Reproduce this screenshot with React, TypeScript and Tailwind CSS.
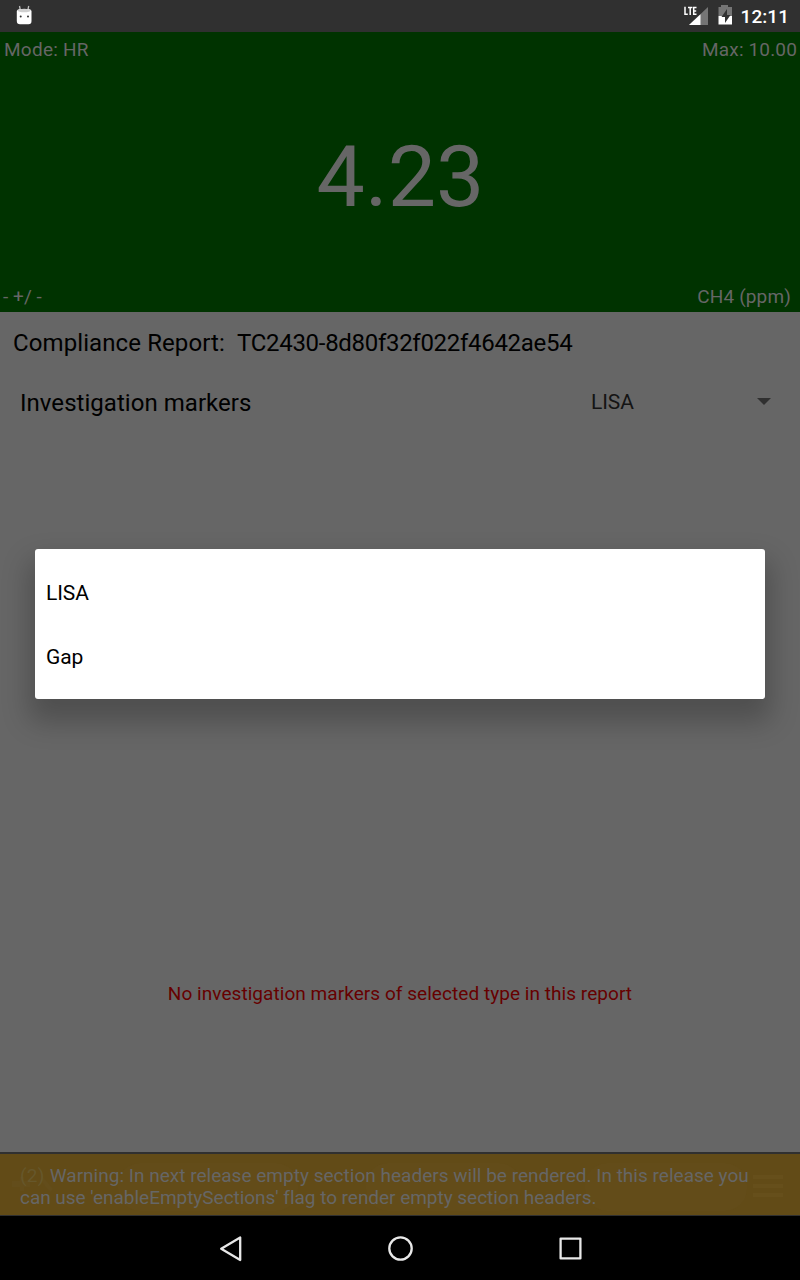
import React from "react";

function StatusBar() {
  return (
    <header className="flex h-8 shrink-0 items-center justify-between bg-[#303030] pl-4 pr-[11px] text-white">
      <svg width="18" height="20" viewBox="0 0 18 20" className="-mt-[2px]">
        <path d="M3.5 1l.8 4M12.7 1l-.8 4" stroke="#bdbdbd" strokeWidth="1.3" />
        <path d="M.8 6Q1 4.5 4 4h8.5q3 .5 3 2v10q0 3.3-3 3.3H4q-3.2 0-3.2-3.3z" fill="#fff" />
        <ellipse cx="8.2" cy="5.5" rx="6.5" ry="1.8" fill="#cfcfcf" />
        <circle cx="4.7" cy="11.4" r="1" fill="#303030" />
        <circle cx="12" cy="11.4" r="1" fill="#303030" />
      </svg>
      <div className="flex items-center">
        <svg width="50" height="24" viewBox="0 0 50 24" className="mr-[7px]">
          <path d="M24 3v18H5z" fill="#757575" />
          <path d="M16.5 10.3V21H5z" fill="#fff" />
          <path d="M0 2h13.5v9.5H0z" fill="#303030" />
          <path d="M1 2.8v7.5h2.8M4 3.5h4.4M6.2 3.5V11M12.5 3.5H9.7v6.8h2.8M9.7 7h2.5" fill="none" stroke="#fff" strokeWidth="1.5" />
          <path d="M37 1h7v2h4v9H34.5V3H37z" fill="#757575" />
          <path d="M34.5 12H48v8.5H34.5z" fill="#fff" />
          <path d="M43 5l-5.5 8H41v6l5.5-8H43z" fill="#303030" />
        </svg>
        <span className="pt-px text-[19px] font-medium leading-8 tracking-[0.05px]">12:11</span>
      </div>
    </header>
  );
}

function Reading() {
  return (
    <section className="flex h-[280px] shrink-0 flex-col justify-between bg-[#003300] text-[19px] leading-[22px] tracking-[0.05px] text-[#666]">
      <div className="flex justify-between pl-1 pr-[3px] pt-[7px]">
        <span className="tracking-[0.25px]">Mode: HR</span>
        <span className="tracking-[0.15px]">Max: 10.00</span>
      </div>
      <div className="pl-px pt-[7px] text-center text-[86px] leading-[100px]">4.23</div>
      <div className="flex justify-between pb-1 pl-[3px] pr-[9px]">
        <span>- +/ -</span>
        <span className="tracking-[0.15px]">CH4 (ppm)</span>
      </div>
    </section>
  );
}

function Warning() {
  return (
    <div className="relative flex h-16 shrink-0 flex-col justify-center border-b border-t-2 border-b-[#303030] border-t-[#303030] bg-[#624b17]">
      <svg className="absolute inset-0" width="800" height="61" viewBox="0 0 800 61" fill="#634c19">
        <rect x="118" y="9" width="180" height="48" rx="22" />
        <rect x="366" y="9" width="155" height="48" rx="22" />
        <rect x="585" y="9" width="162" height="48" rx="22" />
        <path d="M12 27h8v-4h4v4h6v6h-6v4h-4v-4h-8zM40 26l4-2 9 11-3 3z" fill="#634d1b" />
        <path d="M753 21h30v4h-30zM753 30h30v4h-30zM753 39h30v4h-30z" fill="#664f1b" />
      </svg>
      <p className="relative pl-5 pt-[4px] text-[19px] leading-[22px] tracking-[0.03px] text-[#666]">
        <span className="tracking-[0.3px] text-[#66572b]">(2) </span>
        <span className="tracking-[0.015px]">
          Warning: In next release empty section headers will be rendered. In this release you
        </span>
        <br />
        <span className="tracking-[-0.03px]">can use 'enableEmptySections' flag to render empty section headers.</span>
      </p>
    </div>
  );
}

function NavigationBar() {
  return (
    <nav className="flex h-16 shrink-0 items-center justify-center bg-black">
      <svg width="380" height="32" viewBox="0 0 380 32" fill="none" stroke="#e8e8e8" strokeWidth="2.3" strokeLinejoin="round">
        <path d="M30.2 5.5v22.5L11.2 16.7z" />
        <circle cx="190.5" cy="16.5" r="11.2" />
        <rect x="350.6" y="6.6" width="19.8" height="19.8" />
      </svg>
    </nav>
  );
}

export default function App() {
  return (
    <div className="relative flex h-[1280px] w-[800px] flex-col overflow-hidden bg-[#666] font-['Roboto',sans-serif]">
      <StatusBar />
      <Reading />
      <main className="flex grow flex-col text-2xl leading-7 text-black">
        <h1 className="flex pl-[13px] pt-[17px]">
          <span className="whitespace-pre tracking-[0.1px]">Compliance Report:  </span>
          <span className="tracking-[-0.3px]">TC2430-8d80f32f022f4642ae54</span>
        </h1>
        <div className="mt-8 flex items-center pl-5 pr-[29px]">
          <span className="w-[571px] tracking-[0.04px]">Investigation markers</span>
          <span className="-mt-[2px] text-[21px] tracking-[-0.1px] text-[#141414]">LISA</span>
          <svg className="-mt-1 ml-auto" width="14" height="7" viewBox="0 0 14 7">
            <path d="M0 0h14L7 7z" fill="#303030" />
          </svg>
        </div>
        <p className="mb-[147px] mt-auto text-center text-[19px] leading-[22px] tracking-[0.05px] text-[#660000]">
          No investigation markers of selected type in this report
        </p>
      </main>
      <Warning />
      <NavigationBar />
      <div className="absolute left-[35px] top-[549px] flex h-[150px] w-[730px] flex-col justify-center rounded-[3px] bg-white pl-[11px] pt-[4px] text-[21px] tracking-[-0.1px] text-black shadow-[0_17px_28px_6px_rgba(0,0,0,0.23)]">
        <div className="flex h-16 items-center">LISA</div>
        <div className="flex h-16 items-center">Gap</div>
      </div>
    </div>
  );
}
